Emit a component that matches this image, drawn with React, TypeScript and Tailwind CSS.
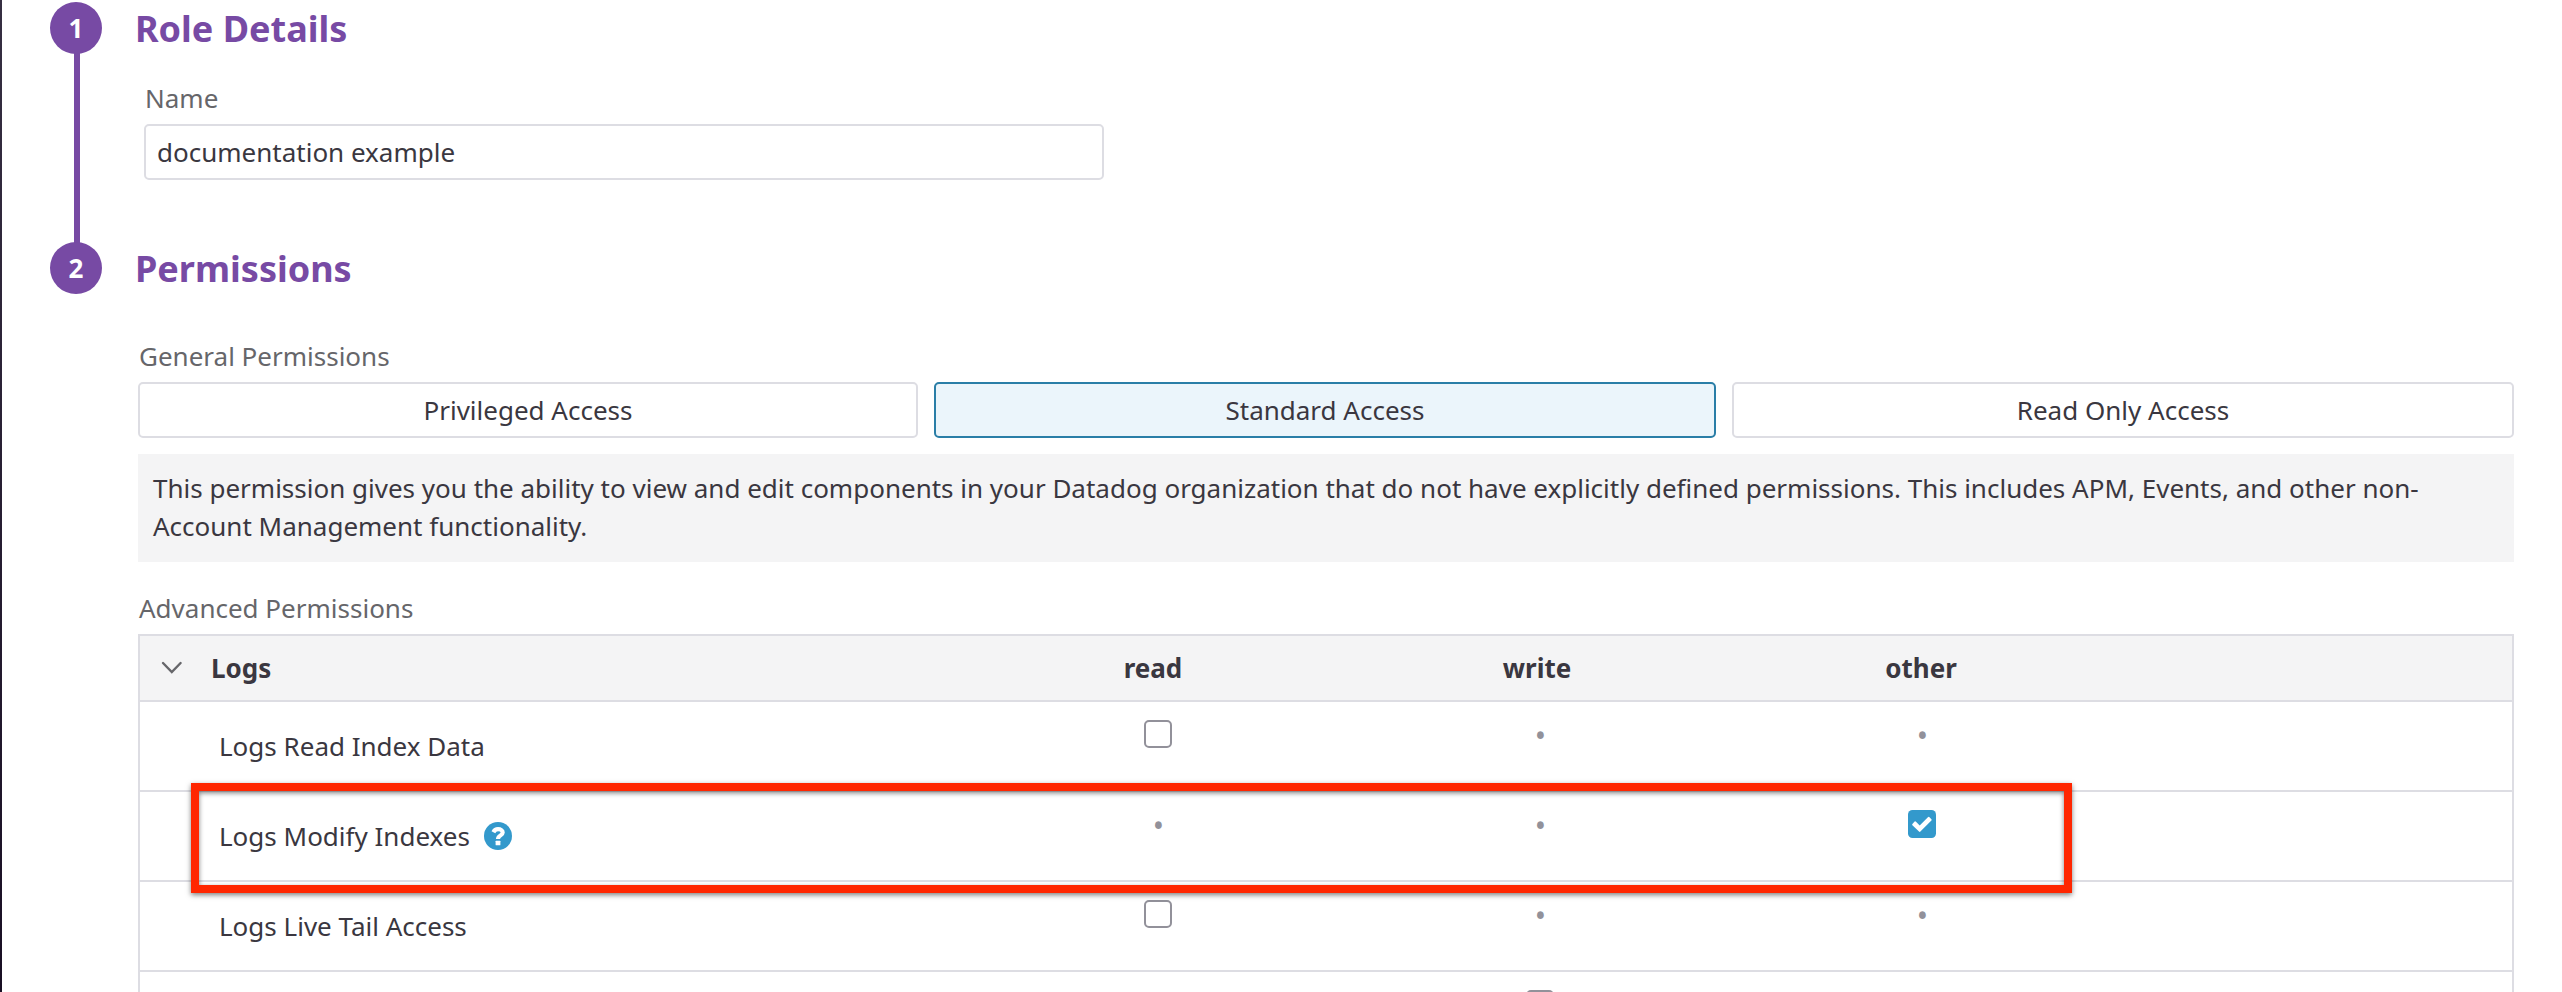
import type { ReactNode } from "react";

type Cell = "empty" | "unchecked" | "checked" | "none";

interface Permission {
  name: string;
  help?: boolean;
  cells: [Cell, Cell, Cell];
}

const permissions: Permission[] = [
  { name: "Logs Read Index Data", cells: ["unchecked", "empty", "empty"] },
  { name: "Logs Modify Indexes", help: true, cells: ["empty", "empty", "checked"] },
  { name: "Logs Live Tail Access", cells: ["unchecked", "empty", "empty"] },
  { name: "", cells: ["none", "unchecked", "none"] },
];

const accessLevels = [
  { label: "Privileged Access", width: "w-[780px]", selected: false },
  { label: "Standard Access", width: "w-[782px]", selected: true },
  { label: "Read Only Access", width: "w-[782px]", selected: false },
];

function StepNumber({ children }: { children: ReactNode }) {
  return (
    <div className="flex size-[52px] shrink-0 items-center justify-center rounded-full bg-[#774aa4] text-[26px] leading-[52px] font-bold text-white">
      {children}
    </div>
  );
}

function StepTitle({ children }: { children: ReactNode }) {
  return (
    <h2 className="h-[52px] pl-[33px] text-[36px] leading-[54px] font-bold text-[#774aa4]">{children}</h2>
  );
}

function Label({ children }: { children: ReactNode }) {
  return <div className="h-9 pl-px text-[26px] leading-9 text-[#66666a]">{children}</div>;
}

function HelpIcon() {
  return (
    <svg className="ml-[14px] size-7" viewBox="0 0 28 28">
      <circle cx="14" cy="14" r="14" fill="#3399cc" />
      <path d="M9.400 10.200C10.400 8.200 11.900 7.200 14 7.200C16.800 7.200 18.700 8.500 18.700 10.500C18.700 13.400 14 13.400 14 17" fill="none" stroke="#fff" strokeWidth="4.200" />
      <rect x="11.600" y="18.700" width="4.800" height="4.600" rx="0.600" fill="#fff" />
    </svg>
  );
}

function PermissionCell({ value }: { value: Cell }) {
  if (value === "none") {
    return <div />;
  }
  if (value === "empty") {
    return <div className="pt-4 pl-px text-center text-[30px] leading-9 text-[#92919a]">•</div>;
  }
  return (
    <div className="flex justify-center pt-[18px]">
      {value === "checked" ? (
        <svg className="size-7" viewBox="0 0 28 28">
          <rect width="28" height="28" rx="4.500" fill="#3399cc" />
          <path d="M4.400 13.900L6.600 11.600Q7.300 11 8 11.700L11.700 15.400L19.900 7.200Q20.700 6.500 21.500 7.200L23.400 9.200Q24.100 9.900 23.400 10.600L12.400 21.600Q11.700 22.200 11 21.600L4.400 15.200Q3.800 14.500 4.400 13.900Z" fill="#fff" />
        </svg>
      ) : (
        <div className="size-7 rounded-[5px] border-2 border-[#92919a] bg-white" />
      )}
    </div>
  );
}

export default function App() {
  return (
    <div className="relative flex h-[992px] w-[2562px] overflow-hidden bg-white font-['Noto_Sans',sans-serif] text-[26px] text-[#3a3740]">
      <div className="w-[2px] shrink-0 bg-linear-to-b from-[#362f42] to-[#190f24]" />

      <main className="flex w-[2512px] shrink-0 flex-col pt-[2px] pl-12">
        <section className="flex h-[240px] shrink-0">
          <div className="flex w-[52px] shrink-0 flex-col">
            <StepNumber>1</StepNumber>
            <div className="-my-px ml-6 w-[6px] flex-1 bg-[#774aa4]" />
          </div>
          <div>
            <StepTitle>Role Details</StepTitle>
            <div className="pt-[26px] pl-[42px]">
              <Label>Name</Label>
              <div className="mt-2 h-14 w-[960px] rounded-[5px] border-2 border-[#dddde3] pl-[11px] leading-[52px]">
                documentation example
              </div>
            </div>
          </div>
        </section>

        <section className="flex shrink-0">
          <StepNumber>2</StepNumber>
          <div>
            <StepTitle>Permissions</StepTitle>
            <div className="w-[2412px] pt-11 pl-9">
              <Label>General Permissions</Label>
              <div className="mt-2 flex gap-4">
                {accessLevels.map(({ label, width, selected }) => (
                  <div
                    key={label}
                    className={`h-14 rounded-[5px] border-2 text-center leading-[52px] ${width} ${
                      selected ? "border-[#2a7ea7] bg-[#ebf5fb]" : "border-[#dddde3] bg-white"
                    }`}
                  >
                    {label}
                  </div>
                ))}
              </div>

              <p className="mt-4 h-[108px] bg-[#f4f4f5] px-[15px] pt-[15px] leading-[38px]">
                This permission gives you the ability to view and edit components in your Datadog organization that do
                not have explicitly defined permissions. This includes APM, Events, and other non-
                <br />
                Account Management functionality.
              </p>

              <div className="mt-7">
                <Label>Advanced Permissions</Label>
              </div>
              <div className="mt-2 border-2 border-b-0 border-[#dddde3]">
                <div className="grid h-[66px] grid-cols-[821px_384px_384px_384px_1fr] border-b-2 border-[#dddde3] bg-[#f4f4f5] text-center leading-[64px] font-bold">
                  <div className="flex items-center">
                    <svg className="ml-[21px] h-[14px] w-[22px]" viewBox="0 0 22 14" fill="none" stroke="#66666a" strokeWidth="2.400" strokeLinecap="round">
                      <path d="M2 2L10.800 11L19.600 2" />
                    </svg>
                    <span className="ml-[28px]">Logs</span>
                  </div>
                  <div>read</div>
                  <div>write</div>
                  <div>other</div>
                </div>
                {permissions.map(({ name, help, cells }, row) => (
                  <div
                    key={row}
                    className="grid h-[90px] grid-cols-[827px_382px_382px_382px_1fr] border-b-2 border-[#dddde3]"
                  >
                    <div className="flex items-center pl-[79px] leading-[88px]">
                      {name}
                      {help && <HelpIcon />}
                    </div>
                    {cells.map((value, column) => (
                      <PermissionCell key={column} value={value} />
                    ))}
                  </div>
                ))}
              </div>
            </div>
          </div>
        </section>
      </main>

      <div className="absolute top-[783px] left-[191px] h-[110px] w-[1881px] border-8 border-[#ff2600] shadow-[0_2px_5px_rgba(0,0,0,0.5),inset_0_2px_5px_rgba(0,0,0,0.5)]" />
    </div>
  );
}
